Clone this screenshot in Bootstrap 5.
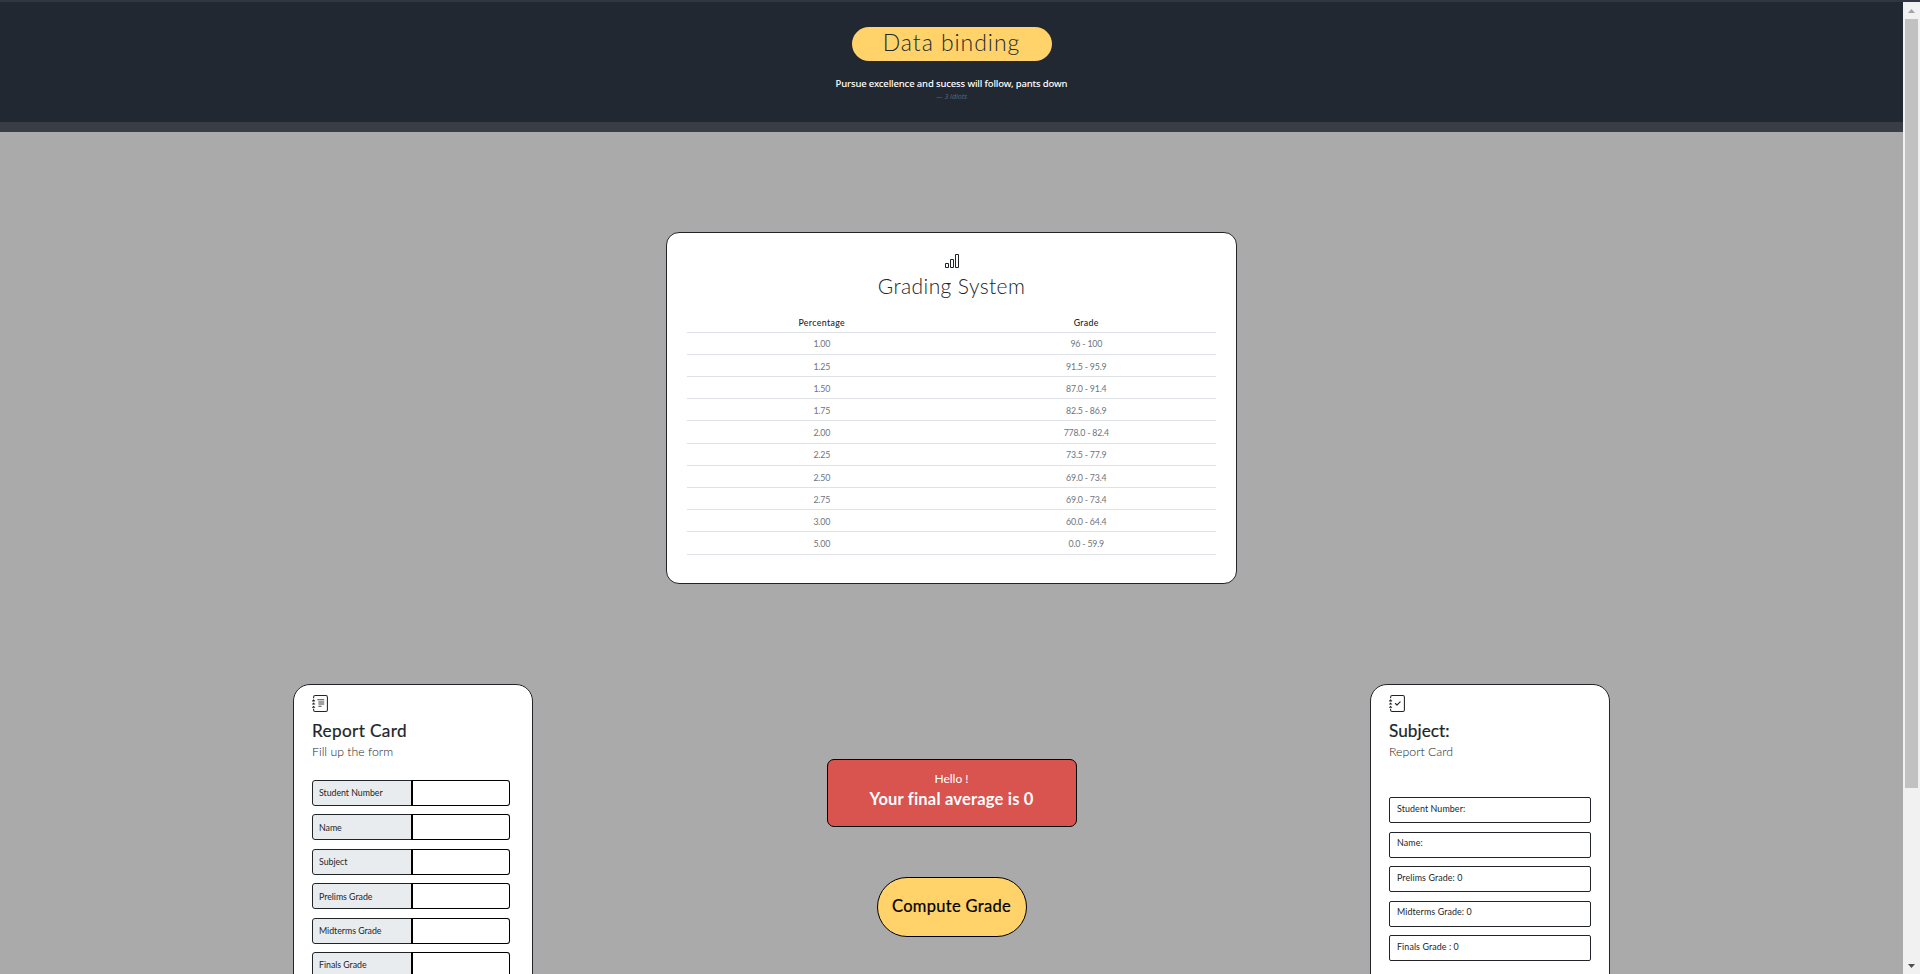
<!DOCTYPE html>
<html lang="en">
<head>
<meta charset="utf-8">
<meta name="viewport" content="width=device-width, initial-scale=1">
<title>Data binding</title>
<link href="https://cdn.jsdelivr.net/npm/bootstrap@5.3.0/dist/css/bootstrap.min.css" rel="stylesheet">
<style>
html,body{height:100%;overflow:hidden}
body{font-family:Lato,"Open Sans",sans-serif;background:#aaa;color:#212529;line-height:1.5}
.topline{height:2px;background:#323544}
.viewport{height:100vh}
.page{background:#aaa}
.hero{height:130px;background:#222831;border-bottom:10px solid #393e46;padding-top:25px}
.title-pill{width:200px;height:34px;background:#ffd369;color:#222831;font-size:23px;font-weight:300;letter-spacing:.95px;line-height:31px}
.quote{font:500 9.5px/15px "Noto Sans",sans-serif;color:#fff;margin-top:15px;letter-spacing:-.14px}
.cite{font:italic 7px/10px "Noto Sans",sans-serif;color:#6c757d;margin-top:1px;opacity:.8}
.outlined{border:1px solid #212529}
.grading{width:571px;height:352px;margin-top:100px;border-radius:13px;padding:20px 20px 0}
.grading svg{height:16px}
.grading h1{font-size:21px;font-weight:300;line-height:24px;margin:5px 0 12px;letter-spacing:.4px;color:#212529}
.grading .table{font-size:8.8px;line-height:13.2px;table-layout:fixed;--bs-table-bg:transparent}
.grading .table th,.grading .table td{padding:4.8px 4px 3.2px 9px;height:22.2px;border-color:#dee2e6;width:50%}
.grading .table th{font-weight:500;color:#212529;letter-spacing:.35px;padding-top:6px;padding-bottom:2px}
.grading .table td{color:#6c757d;letter-spacing:-.2px}
.lower{padding:0 293px;margin-top:100px}
.side{width:240px;height:420px;border-radius:17px;padding:10px 18px}
.side svg{width:17px;height:17px;display:block}
.side h2{font-size:17.2px;line-height:22px;margin:8px 0 0;font-weight:400;letter-spacing:.35px;-webkit-text-stroke:.2px currentColor}
.side .colon{letter-spacing:.05px}
.side .sub{font-size:12.3px;font-weight:300;line-height:18px;margin:1px 0 0}
.fields{margin-top:19px;width:198px;gap:8.4px}
.fields .input-group{height:26px;flex-wrap:nowrap}
.fields .input-group .form-control{border-color:#000;border-left-width:2px;border-radius:3px;min-height:0;padding:0 6px}
.fields .input-group .input-group-text{width:100px;padding:0 6px;font-size:8.8px;background:#e9ecef;border-color:#212529;color:#212529;border-radius:3px;letter-spacing:-.03px}
.result{margin-top:36px;gap:8.6px;width:202px}
.result div{height:26px;border-radius:2px;padding:3.5px 7px;font-size:8.9px;line-height:13px;letter-spacing:.1px}
.middle{width:250px;padding-top:75px}
.notice{height:68px;background:#d9534f;border:1px solid #000;border-radius:7px;color:#fff;padding-top:9px}
.notice p{font-size:12px;font-weight:400;line-height:19px;margin:0}
.notice strong{font-size:16.5px;line-height:23px;display:block;letter-spacing:.2px}
.compute{width:150px;height:60px;background:#ffd369;border:1px solid #000;margin-top:50px;font-size:16.5px;font-weight:400;color:#000;padding:0 0 1px;letter-spacing:.3px;-webkit-text-stroke:.2px currentColor}
.sbar{width:17px;background:#f1f1f1}
.thumb{height:769px;width:13px;background:#c1c1c1}
.arrow{height:17px}
</style>
</head>
<body>
<div class="viewport d-flex flex-column overflow-hidden">
<div class="topline flex-shrink-0"></div>
<div class="d-flex flex-grow-1 overflow-hidden">
<main class="page flex-grow-1 overflow-hidden">
<header class="hero d-flex flex-column align-items-center text-center">
<div class="title-pill rounded-pill">Data binding</div>
<div class="quote">Pursue excellence and sucess will follow, pants down</div>
<div class="cite">— 3 idiots</div>
</header>
<section class="grading outlined bg-white mx-auto text-center">
<svg class="d-block mx-auto" width="16" height="16" viewBox="0 0 16 16" fill="currentColor"><path fill-rule="evenodd" d="M11 2a1 1 0 0 1 1-1h2a1 1 0 0 1 1 1v12a1 1 0 0 1-1 1h-2a1 1 0 0 1-1-1V2zm1 0v12h2V2h-2zM6 7a1 1 0 0 1 1-1h2a1 1 0 0 1 1 1v7a1 1 0 0 1-1 1H7a1 1 0 0 1-1-1V7zm1 0v7h2V7H7zm-6 4a1 1 0 0 1 1-1h2a1 1 0 0 1 1 1v3a1 1 0 0 1-1 1H2a1 1 0 0 1-1-1v-3zm1 0v3h2v-3H2z"/></svg>
<h1>Grading System</h1>
<table class="table mb-0">
<thead><tr><th>Percentage</th><th>Grade</th></tr></thead>
<tbody>
<tr><td>1.00</td><td>96 - 100</td></tr>
<tr><td>1.25</td><td>91.5 - 95.9</td></tr>
<tr><td>1.50</td><td>87.0 - 91.4</td></tr>
<tr><td>1.75</td><td>82.5 - 86.9</td></tr>
<tr><td>2.00</td><td>778.0 - 82.4</td></tr>
<tr><td>2.25</td><td>73.5 - 77.9</td></tr>
<tr><td>2.50</td><td>69.0 - 73.4</td></tr>
<tr><td>2.75</td><td>69.0 - 73.4</td></tr>
<tr><td>3.00</td><td>60.0 - 64.4</td></tr>
<tr><td>5.00</td><td>0.0 - 59.9</td></tr>
</tbody>
</table>
</section>
<section class="lower d-flex justify-content-between align-items-start">
<div class="side outlined bg-white">
<svg viewBox="0 0 16 16" fill="currentColor"><path d="M5 4h6.500v1H5zm1 2h5.500v1H6zm0 2h5.500v1H6zm0 2h3v1H6z" opacity=".85"/><path d="M3 0h10a2 2 0 0 1 2 2v12a2 2 0 0 1-2 2H3a2 2 0 0 1-2-2v-1h1v1a1 1 0 0 0 1 1h10a1 1 0 0 0 1-1V2a1 1 0 0 0-1-1H3a1 1 0 0 0-1 1v1H1V2a2 2 0 0 1 2-2z"/><path d="M1 5v-.5a.5.5 0 0 1 1 0V5h.5a.5.5 0 0 1 0 1h-2a.5.5 0 0 1 0-1H1zm0 3v-.5a.5.5 0 0 1 1 0V8h.5a.5.5 0 0 1 0 1h-2a.5.5 0 0 1 0-1H1zm0 3v-.5a.5.5 0 0 1 1 0v.5h.5a.5.5 0 0 1 0 1h-2a.5.5 0 0 1 0-1H1z"/></svg>
<h2>Report Card</h2>
<p class="sub">Fill up the form</p>
<div class="fields d-flex flex-column">
<div class="input-group"><span class="input-group-text">Student Number</span><input class="form-control" aria-label="Student Number"></div>
<div class="input-group"><span class="input-group-text">Name</span><input class="form-control" aria-label="Name"></div>
<div class="input-group"><span class="input-group-text">Subject</span><input class="form-control" aria-label="Subject"></div>
<div class="input-group"><span class="input-group-text">Prelims Grade</span><input class="form-control" aria-label="Prelims Grade"></div>
<div class="input-group"><span class="input-group-text">Midterms Grade</span><input class="form-control" aria-label="Midterms Grade"></div>
<div class="input-group"><span class="input-group-text">Finals Grade</span><input class="form-control" aria-label="Finals Grade"></div>
</div>
</div>
<div class="middle d-flex flex-column align-items-center">
<div class="notice w-100 text-center"><p>Hello !</p><strong>Your final average is 0</strong></div>
<button class="btn compute rounded-pill">Compute Grade</button>
</div>
<div class="side outlined bg-white">
<svg viewBox="0 0 16 16" fill="currentColor"><path fill-rule="evenodd" d="M10.854 6.146a.5.5 0 0 1 0 .708l-3 3a.5.5 0 0 1-.708 0l-1.500-1.500a.5.5 0 1 1 .708-.708L7.500 8.793l2.646-2.647a.5.5 0 0 1 .708 0z"/><path d="M3 0h10a2 2 0 0 1 2 2v12a2 2 0 0 1-2 2H3a2 2 0 0 1-2-2v-1h1v1a1 1 0 0 0 1 1h10a1 1 0 0 0 1-1V2a1 1 0 0 0-1-1H3a1 1 0 0 0-1 1v1H1V2a2 2 0 0 1 2-2z"/><path d="M1 5v-.5a.5.5 0 0 1 1 0V5h.5a.5.5 0 0 1 0 1h-2a.5.5 0 0 1 0-1H1zm0 3v-.5a.5.5 0 0 1 1 0V8h.5a.5.5 0 0 1 0 1h-2a.5.5 0 0 1 0-1H1zm0 3v-.5a.5.5 0 0 1 1 0v.5h.5a.5.5 0 0 1 0 1h-2a.5.5 0 0 1 0-1H1z"/></svg>
<h2 class="colon">Subject:</h2>
<p class="sub">Report Card</p>
<div class="result d-flex flex-column">
<div class="outlined">Student Number:</div>
<div class="outlined">Name:</div>
<div class="outlined">Prelims Grade: 0</div>
<div class="outlined">Midterms Grade: 0</div>
<div class="outlined">Finals Grade : 0</div>
</div>
</div>
</section>
</main>
<aside class="sbar d-flex flex-column align-items-center flex-shrink-0">
<svg class="arrow flex-shrink-0" width="17" height="17" viewBox="0 0 17 17"><path d="M5 11h7L8.500 7z" fill="#a3a3a3"/></svg>
<div class="thumb flex-shrink-0"></div>
<svg class="arrow mt-auto flex-shrink-0" width="17" height="17" viewBox="0 0 17 17"><path d="M5 7h7L8.500 11z" fill="#505050"/></svg>
</aside>
</div>
</div>
<script src="https://cdn.jsdelivr.net/npm/bootstrap@5.3.0/dist/js/bootstrap.bundle.min.js"></script>
</body>
</html>
